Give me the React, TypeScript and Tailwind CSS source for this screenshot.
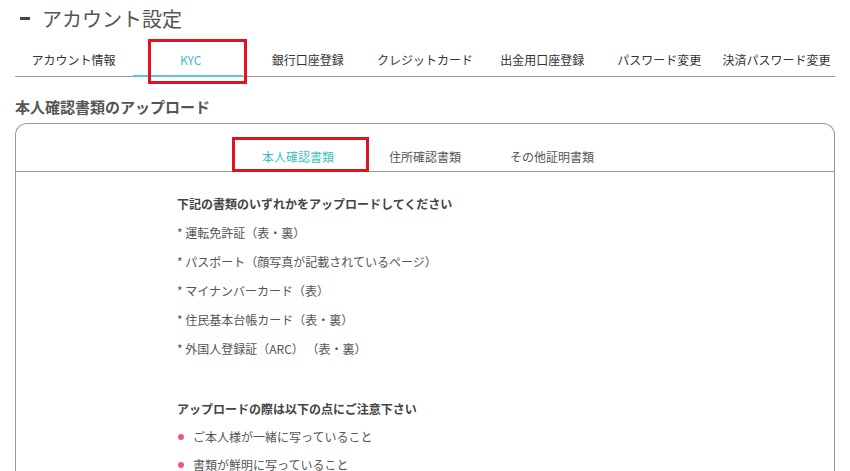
import React from "react";

const mainTabs = ["アカウント情報", "KYC", "銀行口座登録", "クレジットカード", "出金用口座登録", "パスワード変更", "決済パスワード変更"];
const docTabs = ["本人確認書類", "住所確認書類", "その他証明書類"];
const documents = [
  "* 運転免許証（表・裏）",
  "* パスポート（顔写真が記載されているページ）",
  "* マイナンバーカード（表）",
  "* 住民基本台帳カード（表・裏）",
  "* 外国人登録証（ARC） （表・裏）",
];
const notes = ["ご本人様が一緒に写っていること", "書類が鮮明に写っていること"];

export default function App() {
  return (
    <div className="h-[471px] w-[850px] overflow-hidden bg-white font-['Noto_Sans_CJK_JP','Noto_Sans',sans-serif] text-[#555]">
      <div className="px-[15px]">
        <h1 className="flex h-[37px] items-center gap-[12px] pl-[5px] text-[20px] leading-none text-[#555]">
          <span className="h-[3px] w-[10px] bg-[#444]" />
          アカウント設定
        </h1>

        <nav className="flex h-[40px] border-b border-[#999]">
          {mainTabs.map((tab, i) => (
            <div
              key={tab}
              className={
                "relative flex flex-1 items-center justify-center pt-[7px] text-[12px] leading-[18px] " +
                (i === 1 ? "text-[#3fbfc1]" : "text-[#333]")
              }
            >
              {tab}
              {i === 1 && (
                <>
                  <span className="absolute bottom-[-1px] left-[1px] right-[6px] h-[2px] bg-[#5cc9cb]" />
                  <span className="absolute left-[16px] top-[2px] h-[45px] w-[99px] border-[3px] border-[#e0141e]" />
                </>
              )}
            </div>
          ))}
        </nav>

        <h2 className="pt-[20px] text-[15px] font-bold leading-[20px] text-[#555]">本人確認書類のアップロード</h2>

        <div className="mt-[6px] h-[400px] rounded-t-[12px] border border-b-0 border-[#999]">
          <div className="flex h-[48px] justify-center border-b border-[#999]">
            {docTabs.map((tab, i) => (
              <div
                key={tab}
                className={
                  "relative flex w-[127px] items-end justify-center pb-[5px] text-[12px] leading-[18px] " +
                  (i === 0 ? "text-[#3fbfc1]" : "text-[#555]")
                }
              >
                {tab}
                {i === 0 && (
                  <>
                    <span className="absolute bottom-[-1px] left-[-2px] right-[0px] h-[2px] bg-[#5cc9cb]" />
                    <span className="absolute bottom-[-1px] left-[-3px] right-[-7px] top-[13px] border-[3px] border-[#e0141e]" />
                  </>
                )}
              </div>
            ))}
          </div>

          <div className="pl-[161px] pt-[23px] text-[12px] leading-[18px]">
            <p className="font-bold text-[#444]">下記の書類のいずれかをアップロードしてください</p>
            {documents.map((doc) => (
              <p key={doc} className="mt-[11px] text-[#555]">
                {doc}
              </p>
            ))}

            <p className="mt-[42px] font-bold text-[#444]">アップロードの際は以下の点にご注意下さい</p>
            {notes.map((note) => (
              <div key={note} className="mt-[10px] flex items-center gap-[9px] text-[#555]">
                <span className="ml-[1px] h-[6px] w-[6px] rounded-full bg-[#ee5a7c]" />
                {note}
              </div>
            ))}
          </div>
        </div>
      </div>
    </div>
  );
}
